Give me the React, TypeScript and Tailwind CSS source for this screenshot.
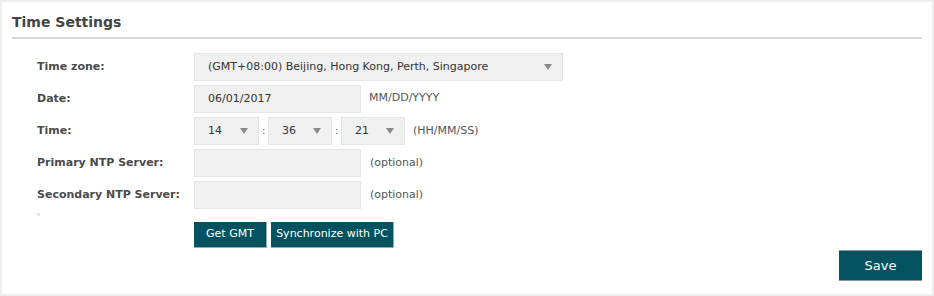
import React from "react";

const font = { fontFamily: '"DejaVu Sans", Verdana, sans-serif' };

const Arrow = () => (
  <svg width="8" height="6" viewBox="0 0 8 6" className="shrink-0">
    <path d="M0 0 H8 L4 6 Z" fill="#8a8a8a" />
  </svg>
);

const Select = ({ value, width }: { value: string; width: string }) => (
  <div
    className={`flex h-[28px] items-center justify-between border border-[#e6e6e6] bg-[#f0f0f0] pl-[13px] pr-[10px] text-[11px] text-[#333] ${width}`}
  >
    <span>{value}</span>
    <Arrow />
  </div>
);

const Input = ({ value = "" }: { value?: string }) => (
  <div className="flex h-[28px] w-[167px] items-center border border-[#e6e6e6] bg-[#f0f0f0] pl-[13px] text-[11px] text-[#333]">
    {value}
  </div>
);

const Row = ({ label, children }: { label: string; children: React.ReactNode }) => (
  <div className="flex items-center">
    <div className="w-[182px] shrink-0 whitespace-nowrap pl-[25px] text-[11px] font-bold text-[#4a4a4a]">
      {label}
    </div>
    <div className="flex items-center">{children}</div>
  </div>
);

export default function App() {
  return (
    <div style={font} className="h-[296px] w-[934px] bg-white">
      <div className="h-[296px] w-[934px] border-2 border-[#eeeeee] px-[10px]">
        <div className="border-b-2 border-[#d8d8d8] pb-[4px] pt-[10px] text-[14px] font-bold text-[#444]">
          Time Settings
        </div>
        <div className="mt-[14px] flex flex-col gap-[4px]">
          <Row label="Time zone:">
            <Select value="(GMT+08:00) Beijing, Hong Kong, Perth, Singapore" width="w-[369px]" />
          </Row>
          <Row label="Date:">
            <Input value="06/01/2017" />
            <span className="ml-[8px] -mt-[2px] text-[11px] text-[#555]">MM/DD/YYYY</span>
          </Row>
          <Row label="Time:">
            <Select value="14" width="w-[65px]" />
            <span className="w-[9px] text-center text-[11px] text-[#666]">:</span>
            <Select value="36" width="w-[64px]" />
            <span className="w-[9px] text-center text-[11px] text-[#666]">:</span>
            <Select value="21" width="w-[64px]" />
            <span className="ml-[8px] text-[11px] text-[#555]">(HH/MM/SS)</span>
          </Row>
          <Row label="Primary NTP Server:">
            <Input />
            <span className="ml-[9px] text-[11px] text-[#555]">(optional)</span>
          </Row>
          <Row label="Secondary NTP Server:">
            <Input />
            <span className="ml-[9px] text-[11px] text-[#555]">(optional)</span>
          </Row>
        </div>
        <div className="ml-[25px] mt-[4px] h-[3px] w-[3px] bg-[#e4e4e4]" />
        <div className="ml-[182px] mt-[6px] flex gap-[4px]">
          <button className="h-[26px] w-[73px] border-b border-r border-[#9aa] bg-[#02535f] text-[11px] text-white">
            Get GMT
          </button>
          <button className="h-[26px] w-[123px] border-b border-r border-[#9aa] bg-[#02535f] text-[11px] text-white">
            Synchronize with PC
          </button>
        </div>
        <div className="mt-[2px] flex justify-end">
          <button className="h-[31px] w-[83px] border-b border-t border-[#8a9a9c] bg-[#02535f] text-[13px] text-white">
            Save
          </button>
        </div>
      </div>
    </div>
  );
}
